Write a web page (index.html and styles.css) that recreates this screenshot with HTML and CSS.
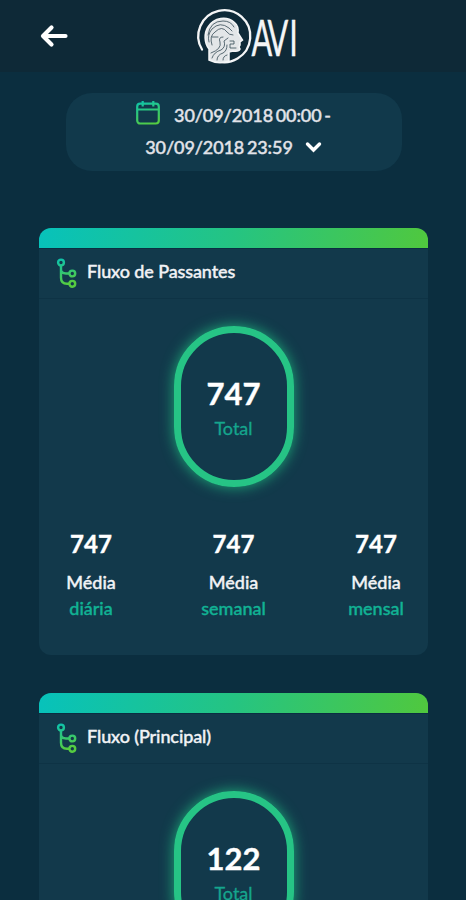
FILE: index.html
```html
<!DOCTYPE html>
<html lang="pt-BR">
<head>
  <meta charset="UTF-8">
  <meta name="viewport" content="width=device-width, initial-scale=1">
  <title>AVI</title>
  <link rel="stylesheet" href="styles.css">
</head>
<body>
  <svg class="defs" width="0" height="0" aria-hidden="true">
    <defs>
      <linearGradient id="icon-gradient" gradientUnits="userSpaceOnUse" x1="0" y1="0" x2="8" y2="27">
        <stop offset="0" stop-color="#08c2b4"/>
        <stop offset="1" stop-color="#55cc40"/>
      </linearGradient>
      <symbol id="flow" viewBox="0 0 22 32">
        <g fill="none" stroke="url(#icon-gradient)" stroke-width="2.4">
          <circle cx="5" cy="4.500" r="2.900"/>
          <circle cx="16.300" cy="15.500" r="2.900"/>
          <circle cx="16.300" cy="25.800" r="2.900"/>
          <path d="M5 7.500v12.300q0 6 6 6h2.400M5 11.500q0 4 5 4h3.400"/>
        </g>
      </symbol>
    </defs>
  </svg>

  <header class="topbar">
    <a class="back" href="#" aria-label="Voltar">
      <svg width="30" height="24" viewBox="0 0 30 24">
        <path d="M12.500 3.500 4 12l8.500 8.500M4.500 12h22" fill="none" stroke="#fff" stroke-width="4.200" stroke-linecap="round" stroke-linejoin="round"/>
      </svg>
    </a>
    <svg class="logo" width="106" height="62" viewBox="0 0 106 62">
      <g fill="none" stroke="#f4f5f6" stroke-linecap="round">
        <path d="M7 43.500A26 26 0 1 1 19 54" stroke-width="2.300"/>
        <path d="M14 54V43C9 37 9 27 13 21C19 11 32 10 39 16Q44 20 43 27L47.500 34L45 36V39L44 41L45 43Q44 46 38 45L34 46V55Q24 59 14 54Z" fill="#e3e6e8" stroke-width="1.500"/>
        <g stroke="#344954" stroke-width=".8">
          <path d="M13 29Q15 15 28 15Q36 15 39 21"/>
          <path d="M14 36Q12 29 17 23Q25 15 34 22L37 25"/>
          <path d="M17 39Q14 30 20 26Q27 19 32 26Q34 29 38 29"/>
          <path d="M16 47Q27 43 25 36Q23 31 28 31"/>
          <path d="M17 52Q19 46 26 44Q31 41 29 35L33 32"/>
          <path d="M22 54Q22 49 28 47Q32 45 32 39"/>
          <path d="M28 54Q28 50 32 49M35 35h4v3h-4v4h6M17 31h6"/>
        </g>
      </g>
      <text class="logo-text" transform="scale(.6 1)" x="94 121 157" y="49.500">AVI</text>
    </svg>
  </header>

  <main class="content">
    <button class="period" type="button">
      <span class="period-line">
        <svg class="calendar" width="24" height="25" viewBox="0 0 24 25">
          <g fill="none" stroke="url(#icon-gradient)" stroke-width="2.200">
            <rect x="1.200" y="3.700" width="21.600" height="19.800" rx="3"/>
            <path d="M1.200 9.500h21.600M6.700 1v5.500M17.300 1v5.500"/>
          </g>
        </svg>
        30/09/2018 00:00 -
      </span>
      <span class="period-line">
        30/09/2018 23:59
        <svg class="chevron" width="17" height="12" viewBox="0 0 17 12">
          <path d="m2.500 3 6 6 6-6" fill="none" stroke="#fff" stroke-width="3.400" stroke-linecap="round"/>
        </svg>
      </span>
    </button>

    <section class="card">
      <div class="card-bar"></div>
      <div class="card-header">
        <svg class="flow-icon" width="22" height="32"><use href="#flow"/></svg>
        <h2>Fluxo de Passantes</h2>
      </div>
      <div class="card-body">
        <div class="ring">
          <strong>747</strong>
          <span>Total</span>
        </div>
        <div class="averages">
          <div class="average">
            <strong>747</strong>
            <span>Média</span>
            <em>diária</em>
          </div>
          <div class="average">
            <strong>747</strong>
            <span>Média</span>
            <em>semanal</em>
          </div>
          <div class="average">
            <strong>747</strong>
            <span>Média</span>
            <em>mensal</em>
          </div>
        </div>
      </div>
    </section>

    <section class="card">
      <div class="card-bar"></div>
      <div class="card-header">
        <svg class="flow-icon" width="22" height="32"><use href="#flow"/></svg>
        <h2>Fluxo (Principal)</h2>
      </div>
      <div class="card-body">
        <div class="ring">
          <strong>122</strong>
          <span>Total</span>
        </div>
      </div>
    </section>
  </main>
</body>
</html>
```
FILE: styles.css
```css
* {
  box-sizing: border-box;
}
body {
  margin: 0;
  height: 900px;
  overflow: hidden;
  background: #0b2e3f;
  color: #f1f2f5;
  font-family: Lato, sans-serif;
  font-size: 18px;
  line-height: 26px;
}
svg {
  display: block;
  flex-shrink: 0;
}
.defs {
  position: absolute;
}
.topbar {
  display: flex;
  height: 72px;
  padding: 6px 0 0 39px;
  background: #0e2937;
}
.back {
  padding-top: 18px;
}
.logo {
  margin-left: 126px;
  overflow: visible;
}
.logo-text {
  font-family: Lato, sans-serif;
  font-size: 51px;
  font-weight: 400;
  fill: #f4f5f6;
  stroke: #f4f5f6;
  stroke-width: .4px;
}
.content {
  padding: 21px 38px 0 39px;
}
.period {
  display: flex;
  flex-direction: column;
  align-items: center;
  width: 336px;
  height: 78px;
  margin: 0 auto 57px;
  padding: 6px 0 0;
  border: 0;
  border-radius: 26px;
  background: #11394b;
  color: #e2e3e9;
  font: 500 18px/32px Lato, sans-serif;
  letter-spacing: -.1px;
  word-spacing: -1.7px;
  -webkit-text-stroke: .4px;
}
.period-line {
  display: flex;
  align-items: center;
  height: 32px;
}
.calendar {
  margin: -5px 14px 0 0;
}
.chevron {
  margin-left: 12px;
}
.card {
  height: 427px;
  margin-bottom: 38px;
  overflow: hidden;
  border-radius: 12px;
  background: #12394b;
}
.card-bar {
  height: 20px;
  background: linear-gradient(100deg, #07c2bb, #25c482 50%, #50c83e);
}
.card-header {
  display: flex;
  height: 51px;
  padding: 9px 17px 0;
  border-top: 1px solid #0b2e42;
  border-bottom: 1px solid #0e3345;
}
.card-header h2 {
  margin: 0 0 0 9px;
  font-size: 18px;
  font-weight: 500;
  letter-spacing: -.1px;
  -webkit-text-stroke: .4px;
}
.card-body {
  padding: 27px 17px 0;
}
.ring {
  display: flex;
  flex-direction: column;
  align-items: center;
  width: 120px;
  height: 161px;
  margin: 0 auto;
  padding-top: 42px;
  border: 7px solid #26c485;
  border-radius: 60px;
  box-shadow: 0 0 14px #1dab78;
}
.ring strong {
  font-size: 31px;
  line-height: 36px;
  color: #fff;
  -webkit-text-stroke: .4px;
}
.ring span {
  margin-top: 4px;
  color: #15a58d;
  -webkit-text-stroke: .3px;
}
.averages {
  display: flex;
  justify-content: space-between;
  margin-top: 42px;
}
.average {
  display: flex;
  flex-direction: column;
  align-items: center;
  width: 70px;
  -webkit-text-stroke: .4px;
}
.average strong {
  margin-bottom: 10px;
  font-size: 24px;
  line-height: 30px;
  color: #fff;
}
.average span {
  font-weight: 500;
}
.average em {
  font-style: normal;
  font-weight: 500;
  color: #11b294;
}
```
